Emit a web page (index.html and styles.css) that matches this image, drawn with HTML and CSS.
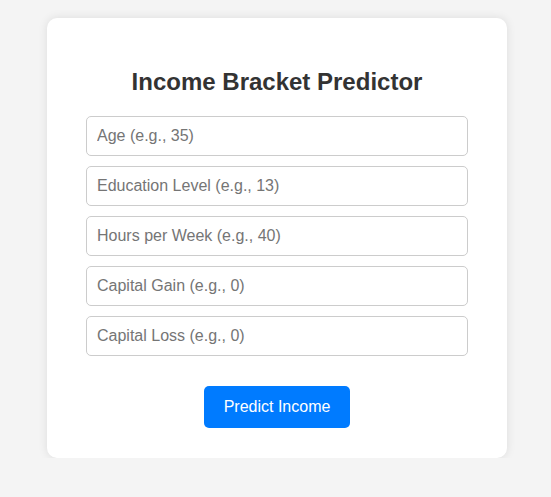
FILE: index.html
```html
<!DOCTYPE html>
<html lang="en">
<head>
<meta charset="UTF-8">
<title>Income Bracket Predictor</title>
<link rel="stylesheet" href="styles.css">
</head>
<body>
<div class="card">
  <h2 class="title">Income Bracket Predictor</h2>
  <form class="form">
    <input class="field" type="number" placeholder="Age (e.g., 35)">
    <input class="field" type="number" placeholder="Education Level (e.g., 13)">
    <input class="field" type="number" placeholder="Hours per Week (e.g., 40)">
    <input class="field" type="number" placeholder="Capital Gain (e.g., 0)">
    <input class="field" type="number" placeholder="Capital Loss (e.g., 0)">
    <button class="btn" type="button">Predict Income</button>
  </form>
</div>
</body>
</html>
```

FILE: styles.css
```css
html, body {
  margin: 0;
  padding: 0;
}
body {
  background: #f4f4f4;
  font-family: "Liberation Sans", Arial, sans-serif;
  display: flex;
  justify-content: center;
  padding: 18px 0 0 3px;
}
.card {
  width: 460px;
  box-sizing: border-box;
  background: #fff;
  border-radius: 10px;
  box-shadow: 0 0 10px rgba(0, 0, 0, 0.1);
  padding: 50px 39px 30px;
}
.title {
  margin: 0 0 20px;
  text-align: center;
  font-size: 24px;
  font-weight: bold;
  color: #333;
  line-height: 28px;
}
.form {
  display: flex;
  flex-direction: column;
  gap: 10px;
  margin: 0;
}
.field {
  box-sizing: border-box;
  width: 100%;
  height: 40px;
  padding: 0 10px;
  border: 1px solid #ccc;
  border-radius: 5px;
  font-family: "Liberation Sans", Arial, sans-serif;
  font-size: 16px;
  color: #333;
  outline: none;
}
.field::placeholder {
  color: #757575;
}
.field::-webkit-outer-spin-button,
.field::-webkit-inner-spin-button {
  -webkit-appearance: none;
  margin: 0;
}
.btn {
  align-self: center;
  margin-top: 20px;
  height: 42px;
  padding: 0 20px;
  border: none;
  border-radius: 5px;
  background: #007bff;
  color: #fff;
  font-family: "Liberation Sans", Arial, sans-serif;
  font-size: 16px;
  cursor: pointer;
}
```
